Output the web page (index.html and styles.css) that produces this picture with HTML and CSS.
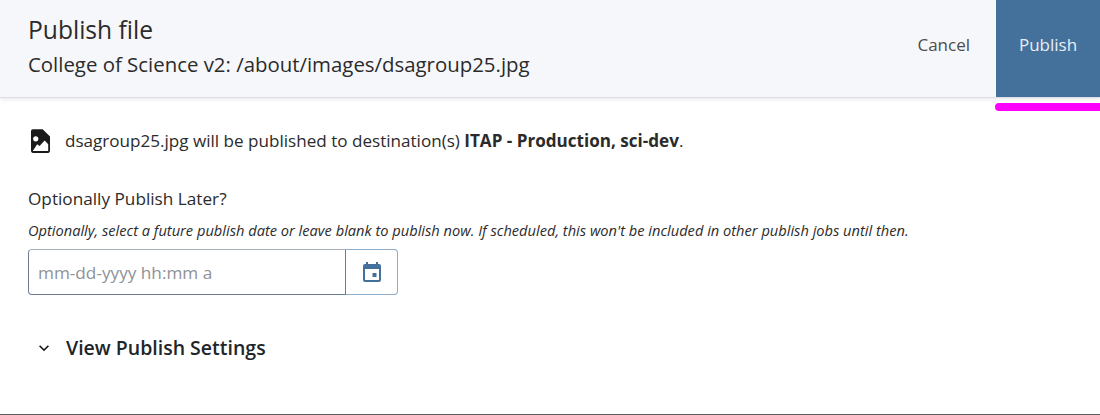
FILE: index.html
```html
<!DOCTYPE html>
<html lang="en">
<head>
<meta charset="utf-8">
<title>Publish file</title>
<link rel="stylesheet" href="styles.css">
</head>
<body>
<div class="page">
  <header class="header">
    <div class="titles">
      <h1 class="title">Publish file</h1>
      <p class="subtitle">College of Science v2: /about/images/dsagroup25.jpg</p>
    </div>
    <div class="actions">
      <button class="btn-cancel" type="button">Cancel</button>
      <button class="btn-publish" type="button">Publish</button>
    </div>
    <span class="marker"></span>
  </header>
  <main class="content">
    <div class="notice">
      <svg class="file-icon" viewBox="4 2 16 20" width="19" height="24" aria-hidden="true"><path fill="#1a1a1a" fill-rule="evenodd" d="M5.600 2h8.200L20 8.200v12.300a1.500 1.500 0 0 1-1.500 1.500H5.500A1.500 1.500 0 0 1 4 20.500V3.600A1.600 1.600 0 0 1 5.600 2zM8 8a2.200 2.200 0 1 0 0 4.400A2.200 2.200 0 0 0 8 8zM5.500 20.500h13v-5.700l-3-3.300-4.300 4.800-2-1.600z"/></svg>
      <p class="notice-text">dsagroup25.jpg will be published to destination(s) <strong>ITAP - Production, sci-dev</strong>.</p>
    </div>
    <label class="field-label" for="when">Optionally Publish Later?</label>
    <p class="hint">Optionally, select a future publish date or leave blank to publish now. If scheduled, this won't be included in other publish jobs until then.</p>
    <div class="date-group">
      <input class="date-input" id="when" type="text" placeholder="mm-dd-yyyy hh:mm a">
      <button class="date-btn" type="button" aria-label="Choose date">
        <svg viewBox="0 0 24 24" width="24" height="24" aria-hidden="true"><path fill="#44719c" d="M19 4h-1V2h-2v2H8V2H6v2H5a2 2 0 0 0-2 2v14a2 2 0 0 0 2 2h14a2 2 0 0 0 2-2V6a2 2 0 0 0-2-2zm0 16H5V9h14v11zm-6.500-7h4v4h-4z"/></svg>
      </button>
    </div>
    <button class="disclosure" type="button">
      <svg viewBox="0 0 24 24" width="20" height="20" aria-hidden="true"><path fill="#1c1c1c" d="M7.400 8.600 12 13.200l4.600-4.600L18 10l-6 6-6-6z"/></svg>
      <span>View Publish Settings</span>
    </button>
  </main>
  <div class="bottom-edge"></div>
</div>
</body>
</html>
```
FILE: styles.css
```css
* { box-sizing: border-box; }
html, body { margin: 0; padding: 0; background: #fff; }
body { font-family: "Open Sans", "Liberation Sans", sans-serif; color: #212529; }
.page { width: 1100px; height: 415px; display: flex; flex-direction: column; overflow: hidden; }
.header { position: relative; flex: none; height: 98px; display: flex; justify-content: space-between; background: #f6f7fa; border-bottom: 1px solid #dcdee3; box-shadow: 0 2px 4px rgba(0,0,0,.08); }
.titles { padding: 14px 0 0 28px; }
.title { margin: 0; font-size: 24.6px; line-height: 32px; font-weight: 400; color: #2b2b2b; }
.subtitle { margin: 3px 0 0; font-size: 20.4px; line-height: 30px; color: #2b2b2b; }
.actions { display: flex; height: 97px; }
.btn-cancel { border: 0; background: none; padding: 0 26px 8px 0; font: 400 17px "Open Sans", sans-serif; color: #4d4d4d; }
.btn-publish { width: 104px; border: 0; padding: 0 0 8px; background: #44719c; font: 400 17px "Open Sans", sans-serif; color: #e8eef5; }
.marker { position: absolute; right: 0; top: 103px; width: 105px; height: 8px; background: #ff00ff; border-radius: 4px 0 0 4px; }
.content { flex: 1; padding: 28px 0 0 31px; }
.notice { display: flex; align-items: center; gap: 15px; height: 30px; }
.file-icon { flex: none; }
.notice-text { margin: 0; font-size: 17.08px; line-height: 24px; color: #2b2b2b; }
.field-label { display: block; margin: 31px 0 0 -3px; font-size: 17.2px; line-height: 24px; color: #2b2b2b; }
.hint { margin: 9px 0 0 -3px; font-size: 14.63px; line-height: 20px; font-style: italic; color: #2b2b2b; }
.date-group { display: flex; width: 370px; height: 46px; margin: 9px 0 0 -3px; }
.date-input { width: 318px; height: 46px; padding: 0 9px; border: 1px solid #6f7d93; border-top-color: #aab0bb; border-radius: 4px 0 0 4px; font: 400 17.2px "Open Sans", sans-serif; color: #2b2b2b; outline: 0; }
.date-input::placeholder { color: #8e9298; opacity: 1; }
.date-btn { flex: 1; display: flex; align-items: center; justify-content: center; padding: 0; background: #fff; border: 1px solid #8fadcc; border-left: 0; border-radius: 0 4px 4px 0; }
.disclosure { display: flex; align-items: center; gap: 12px; margin: 39px 0 0 3px; padding: 0; border: 0; background: none; font: 600 19.5px/28px "Open Sans", sans-serif; color: #212529; }
.bottom-edge { flex: none; height: 1px; background: #5c5c5c; }
```
